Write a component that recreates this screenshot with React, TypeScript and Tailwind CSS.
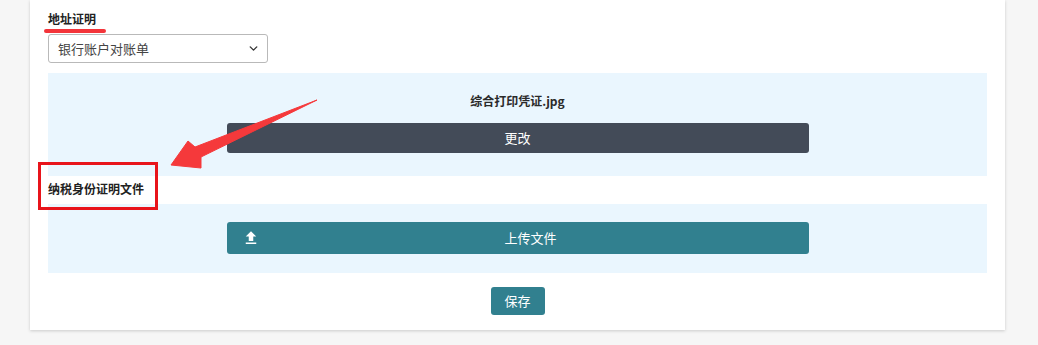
import { ChevronDown } from "lucide-react";
import { MdFileUpload } from "react-icons/md";

const font = { fontFamily: '"Noto Sans CJK SC", "Noto Sans", sans-serif' };

export default function App() {
  return (
    <div className="relative min-h-[345px] w-[1038px] bg-[#f6f6f6]" style={font}>
      <div className="ml-[30px] w-[975px] bg-white px-[18px] pt-[9px] pb-[15px] shadow-[0_1px_3px_rgba(0,0,0,0.18)]">
        {/* 地址证明 */}
        <div className="relative">
          <div className="text-[12px] font-bold leading-[20px] text-[#222]">地址证明</div>
          <div className="absolute left-[-4px] top-[20px] h-[4px] w-[62px] rounded-full bg-[#f3343a]" />
        </div>
        <div className="mt-[5px] flex h-[29px] w-[220px] items-center justify-between rounded-[3px] border border-[#b9b9b9] bg-white pl-[9px] pr-[7px]">
          <span className="text-[13px] text-[#444]">银行账户对账单</span>
          <ChevronDown className="h-[13px] w-[13px] text-[#333]" strokeWidth={2.5} />
        </div>

        <div className="mt-[10px] flex flex-col items-center bg-[#eaf6fe] pt-[18px] pb-[23px]">
          <div className="text-[12px] font-bold leading-[20px] text-[#2a2a2a]">综合打印凭证.jpg</div>
          <button className="mt-[12px] h-[30px] w-[582px] rounded-[3px] bg-[#434b58] text-[13px] text-white">
            更改
          </button>
        </div>

        {/* 纳税身份证明文件 */}
        <div className="mt-[3px] text-[12px] font-bold leading-[20px] text-[#222]">纳税身份证明文件</div>

        <div className="mt-[5px] flex flex-col items-center bg-[#eaf6fe] pt-[18px] pb-[19px]">
          <button className="relative flex h-[32px] w-[582px] items-center justify-center rounded-[3px] bg-[#31808f] text-[13px] text-white">
            <MdFileUpload className="absolute left-[15px] h-[18px] w-[18px]" />
            <span className="ml-[26px]">上传文件</span>
          </button>
        </div>

        <div className="mt-[14px] flex justify-center">
          <button className="h-[28px] w-[54px] rounded-[3px] bg-[#31808f] text-[13px] text-white">保存</button>
        </div>
      </div>

      {/* annotation: red box */}
      <div className="pointer-events-none absolute left-[38px] top-[162px] h-[48px] w-[120px] border-[3px] border-[#e8141b]" />

      {/* annotation: arrow */}
      <svg
        className="pointer-events-none absolute left-0 top-0"
        width="1038"
        height="345"
        viewBox="0 0 1038 345"
      >
        <polygon
          points="317,100 201,157 201,168 171,165 188,141 195,147"
          fill="#f5393b"
          stroke="#f5393b"
          strokeWidth="1"
          strokeLinejoin="round"
        />
      </svg>
    </div>
  );
}
